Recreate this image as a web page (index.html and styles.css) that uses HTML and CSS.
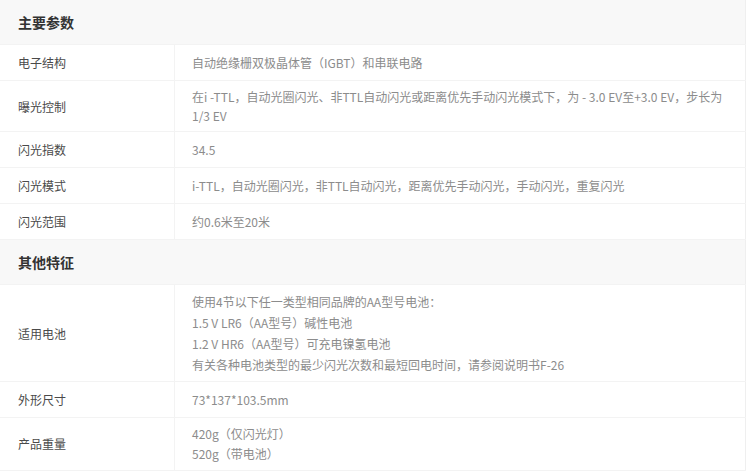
FILE: index.html
```html
<!DOCTYPE html>
<html>
<head>
  <meta charset="utf-8">
  <title>产品参数</title>
  <link rel="stylesheet" href="styles.css">
</head>
<body>
  <table class="specs">
    <tbody>
      <tr class="group">
        <td colspan="2">主要参数</td>
      </tr>
      <tr>
        <td class="label">电子结构</td>
        <td class="value">自动绝缘栅双极晶体管（IGBT）和串联电路</td>
      </tr>
      <tr class="tight">
        <td class="label">曝光控制</td>
        <td class="value">在i -TTL，自动光圈闪光、非TTL自动闪光或距离优先手动闪光模式下，为 - 3.0 EV至+3.0 EV，步长为<br>1/3 EV</td>
      </tr>
      <tr>
        <td class="label">闪光指数</td>
        <td class="value">34.5</td>
      </tr>
      <tr>
        <td class="label">闪光模式</td>
        <td class="value">i-TTL，自动光圈闪光，非TTL自动闪光，距离优先手动闪光，手动闪光，重复闪光</td>
      </tr>
      <tr>
        <td class="label">闪光范围</td>
        <td class="value">约0.6米至20米</td>
      </tr>
      <tr class="group">
        <td colspan="2">其他特征</td>
      </tr>
      <tr class="loose">
        <td class="label">适用电池</td>
        <td class="value">
          使用4节以下任一类型相同品牌的AA型号电池：<br>
          1.5 V LR6（AA型号）碱性电池<br>
          1.2 V HR6（AA型号）可充电镍氢电池<br>
          有关各种电池类型的最少闪光次数和最短回电时间，请参阅说明书F-26
        </td>
      </tr>
      <tr>
        <td class="label">外形尺寸</td>
        <td class="value">73*137*103.5mm</td>
      </tr>
      <tr>
        <td class="label">产品重量</td>
        <td class="value">420g（仅闪光灯）<br>520g（带电池）</td>
      </tr>
    </tbody>
  </table>
</body>
</html>
```

FILE: styles.css
```css
body {
  margin: 0;
  background-color: #fff;
  font-family: "Noto Sans CJK SC", "Noto Sans", sans-serif;
}

.specs {
  border-collapse: collapse;
  width: 746px;
  border-right: 1px solid #efefef;
  font-size: 12px;
}

.specs td {
  padding: 6px 17px;
  height: 23px;
  line-height: 20px;
  border-bottom: 1px solid #f3f3f3;
  vertical-align: middle;
}

.group td {
  background-color: #f8f8f8;
  padding: 12px 18px;
  height: 20px;
  font-size: 14px;
  font-weight: bold;
  color: #333;
}

.label {
  width: 139px;
  padding-left: 18px !important;
  color: #4a4a4a;
  border-right: 1px solid #f3f3f3;
}

.value {
  color: #8c8c8c;
}

.tight td {
  line-height: 19px;
}

.loose td {
  line-height: 21px;
}
```
